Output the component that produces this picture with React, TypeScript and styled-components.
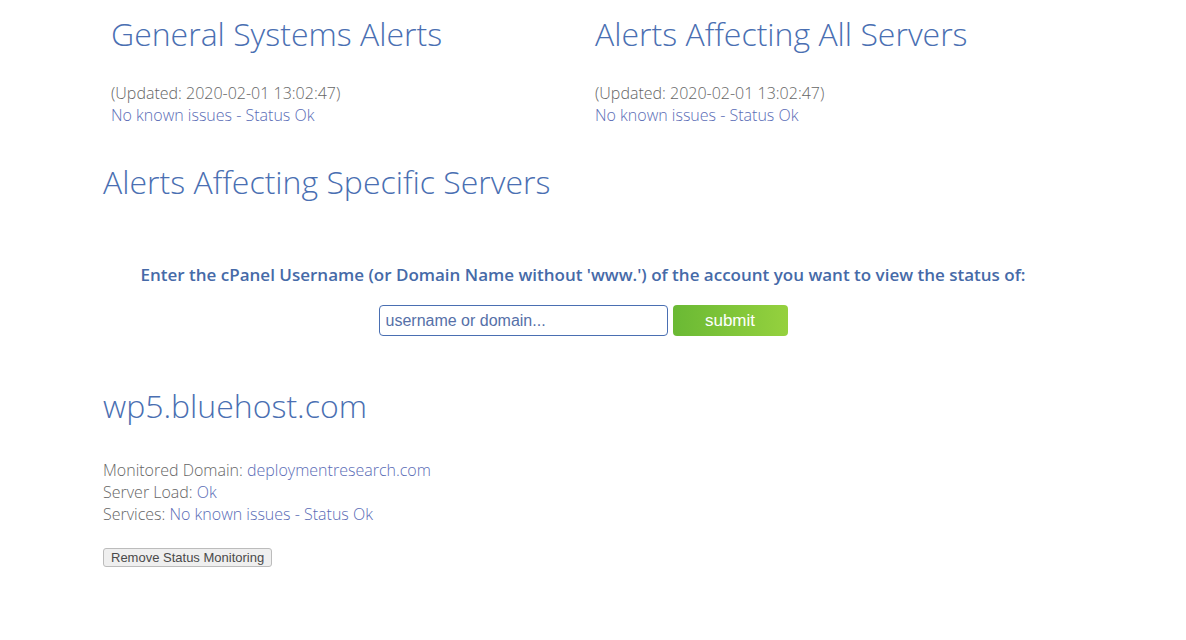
import React, { useState } from "react";
import styled, { createGlobalStyle } from "styled-components";

const GlobalStyle = createGlobalStyle`
	body {
		margin: 0;
		background: #fff;
		font-family: "Open Sans", "Liberation Sans", sans-serif;
		color: #666;
	}
`;

const Page = styled.div`
	width: 960px;
	margin-left: 103px;
	padding-top: 12px;
`;

const TopRow = styled.div`
	display: grid;
	grid-template-columns: 484px 484px;
	padding-left: 8px;
`;

const Column = styled.div``;

const Heading = styled.h2`
	margin: 0;
	font-size: 32px;
	font-weight: 300;
	line-height: 44px;
	color: #4a6fb2;
`;

const Info = styled.div<{ $top?: number }>`
	margin-top: ${(p) => p.$top ?? 26}px;
	font-size: 16px;
	font-weight: 300;
	line-height: 22px;
	color: #666;
`;

const Link = styled.a`
	color: #5a6cb6;
	text-decoration: none;
	cursor: pointer;
`;

const Section = styled.div<{ $top: number }>`
	margin-top: ${(p) => p.$top}px;
`;

const Prompt = styled.p`
	margin: 60px 0 0;
	text-align: center;
	font-size: 17px;
	font-weight: 600;
	line-height: 22px;
	color: #466aa8;
`;

const SearchForm = styled.form`
	display: flex;
	justify-content: center;
	gap: 5px;
	margin-top: 19px;
`;

const Input = styled.input`
	box-sizing: border-box;
	width: 289px;
	height: 31px;
	padding: 0 6px;
	border: 1px solid #4a6fb2;
	border-radius: 4px;
	font-family: "Liberation Sans", Arial, sans-serif;
	font-size: 16px;
	color: #333;
	outline: none;
	&::placeholder {
		color: #5670a8;
	}
`;

const Submit = styled.button`
	width: 115px;
	height: 31px;
	border: none;
	border-radius: 4px;
	background: linear-gradient(to right, #6ab934, #95d13e);
	color: #fff;
	font-family: "Liberation Sans", Arial, sans-serif;
	font-size: 17px;
	cursor: pointer;
`;

const RemoveButton = styled.button`
	margin-top: 23px;
	height: 19px;
	padding: 0 7px;
	border: 1px solid #bcbcbc;
	border-radius: 3px;
	background: #efefef;
	font-family: "Liberation Sans", Arial, sans-serif;
	font-size: 13px;
	color: #4a4a4a;
	line-height: 16px;
	cursor: pointer;
`;

const StatusLine = () => (
	<Link>No known issues - Status Ok</Link>
);

const App: React.FC = () => {
	const [query, setQuery] = useState("");

	return (
		<>
			<GlobalStyle />
			<Page>
				<TopRow>
					<Column>
						<Heading>General Systems Alerts</Heading>
						<Info>
							(Updated: 2020-02-01 13:02:47)
							<br />
							<StatusLine />
						</Info>
					</Column>
					<Column>
						<Heading>Alerts Affecting All Servers</Heading>
						<Info>
							(Updated: 2020-02-01 13:02:47)
							<br />
							<StatusLine />
						</Info>
					</Column>
				</TopRow>

				<Section $top={34}>
					<Heading>Alerts Affecting Specific Servers</Heading>
					<Prompt>
						Enter the cPanel Username (or Domain Name without 'www.') of the
						account you want to view the status of:
					</Prompt>
					<SearchForm onSubmit={(e) => e.preventDefault()}>
						<Input
							placeholder="username or domain..."
							value={query}
							onChange={(e) => setQuery(e.target.value)}
						/>
						<Submit type="submit">submit</Submit>
					</SearchForm>
				</Section>

				<Section $top={48}>
					<Heading>wp5.bluehost.com</Heading>
					<Info $top={31}>
						Monitored Domain: <Link>deploymentresearch.com</Link>
						<br />
						Server Load: <Link>Ok</Link>
						<br />
						Services: <StatusLine />
					</Info>
					<RemoveButton>Remove Status Monitoring</RemoveButton>
				</Section>
			</Page>
		</>
	);
};

export default App;
